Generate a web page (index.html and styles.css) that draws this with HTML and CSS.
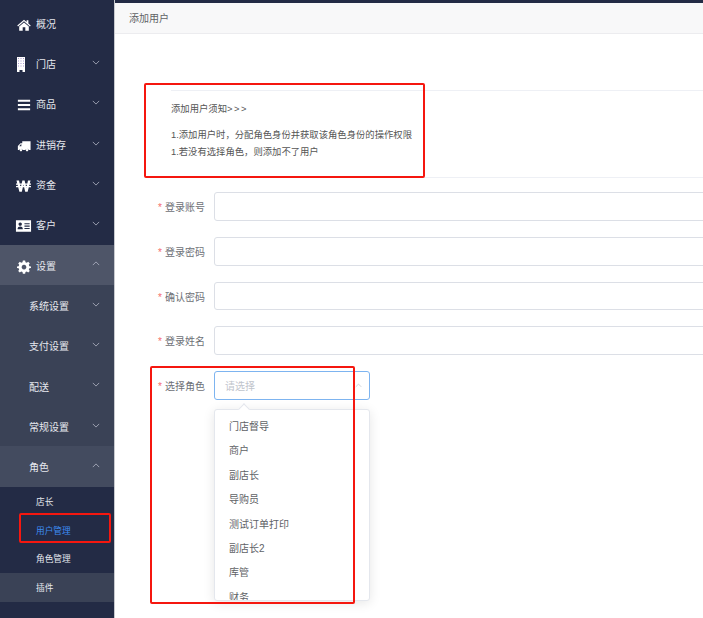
FILE: index.html
```html
<!DOCTYPE html>
<html lang="zh-CN">
<head>
<meta charset="utf-8">
<title>添加用户</title>
<link rel="stylesheet" href="styles.css">
</head>
<body>
<div class="app">
  <aside class="side">
    <div class="item"><svg class="ic" viewBox="0 0 16 14"><path d="M8 1 L0.3 7.6 L1.2 8.6 L8 2.8 L14.8 8.6 L15.7 7.6 L13 5.3 V1.5 H11 V3.6 Z M8 4 L2.5 8.7 V13.5 H6.5 V9.5 H9.5 V13.5 H13.5 V8.7 Z"/></svg><span>概况</span></div>
    <div class="item"><svg class="ic tall" viewBox="0 0 8 15"><path d="M0 0 H8 V15 H5.5 V13 H2.5 V15 H0 Z"/><path class="win" d="M1 1 h1 v1 h-1 Z M3.5 1 h1 v1 h-1 Z M6 1 h1 v1 h-1 Z M1 3.5 h1 v1 h-1 Z M3.5 3.5 h1 v1 h-1 Z M6 3.5 h1 v1 h-1 Z M1 6 h1 v1 h-1 Z M3.5 6 h1 v1 h-1 Z M6 6 h1 v1 h-1 Z M1 8.5 h1 v1 h-1 Z M3.5 8.5 h1 v1 h-1 Z M6 8.5 h1 v1 h-1 Z"/></svg><span>门店</span><svg class="ch" viewBox="0 0 10 6"><path d="M1 1 L5 5 L9 1"/></svg></div>
    <div class="item"><svg class="ic" viewBox="0 0 16 14"><path d="M1 1 H15 V3.4 H1 Z M1 5.8 H15 V8.2 H1 Z M1 10.6 H15 V13 H1 Z"/></svg><span>商品</span><svg class="ch" viewBox="0 0 10 6"><path d="M1 1 L5 5 L9 1"/></svg></div>
    <div class="item"><svg class="ic" viewBox="0 0 16 14"><path fill-rule="evenodd" d="M6 1.5 H15.5 V11.5 H13.4 A2 2 0 0 0 9.6 11.5 H6.4 A2 2 0 0 0 2.6 11.5 H1 V7 L4 3.8 H6 Z M4.5 5 L2.5 7.2 H5 V5 Z M4.5 10.2 A1.4 1.4 0 1 1 4.49 10.2 Z M11.5 10.2 A1.4 1.4 0 1 1 11.49 10.2 Z"/></svg><span>进销存</span><svg class="ch" viewBox="0 0 10 6"><path d="M1 1 L5 5 L9 1"/></svg></div>
    <div class="item"><svg class="ic won" viewBox="0 0 16 14"><path d="M0.5 1 H3.2 L5 9 L6.8 1 H9.2 L11 9 L12.8 1 H15.5 L12.4 13 H9.8 L8 5.5 L6.2 13 H3.6 Z M0 4.4 H16 V5.6 H0 Z M0 7 H16 V8.2 H0 Z"/></svg><span>资金</span><svg class="ch" viewBox="0 0 10 6"><path d="M1 1 L5 5 L9 1"/></svg></div>
    <div class="item"><svg class="ic wide" viewBox="0 0 18 14"><path fill-rule="evenodd" d="M1 1 H17 V13 H1 Z M5.5 3.2 A1.8 1.8 0 1 0 5.51 3.2 Z M2.8 10.5 H8.2 V9.5 Q8 7.6 5.5 7.6 Q3 7.6 2.8 9.5 Z M10 4 V5.2 H15.5 V4 Z M10 6.5 V7.7 H15.5 V6.5 Z M10 9 V10.2 H15.5 V9 Z"/></svg><span>客户</span><svg class="ch" viewBox="0 0 10 6"><path d="M1 1 L5 5 L9 1"/></svg></div>
    <div class="item open"><svg class="ic" viewBox="0 0 16 16"><path fill-rule="evenodd" d="M6.7 0.7 H9.3 L9.7 2.6 L11.2 3.2 L12.8 2.1 L14.6 3.9 L13.5 5.5 L14.1 7 L16 7.4 V9 L14.1 9.4 L13.5 10.9 L14.6 12.5 L12.8 14.2 L11.2 13.1 L9.7 13.7 L9.3 15.6 H6.7 L6.3 13.7 L4.8 13.1 L3.2 14.2 L1.4 12.5 L2.5 10.9 L1.9 9.4 L0 9 V7.4 L1.9 7 L2.5 5.5 L1.4 3.9 L3.2 2.1 L4.8 3.2 L6.3 2.6 Z M8 5.5 A2.7 2.7 0 1 0 8.01 5.5 Z"/></svg><span>设置</span><svg class="ch" viewBox="0 0 10 6"><path d="M1 5 L5 1 L9 5"/></svg></div>
    <div class="sub">
      <div class="item lvl2"><span>系统设置</span><svg class="ch" viewBox="0 0 10 6"><path d="M1 1 L5 5 L9 1"/></svg></div>
      <div class="item lvl2"><span>支付设置</span><svg class="ch" viewBox="0 0 10 6"><path d="M1 1 L5 5 L9 1"/></svg></div>
      <div class="item lvl2"><span>配送</span><svg class="ch" viewBox="0 0 10 6"><path d="M1 1 L5 5 L9 1"/></svg></div>
      <div class="item lvl2"><span>常规设置</span><svg class="ch" viewBox="0 0 10 6"><path d="M1 1 L5 5 L9 1"/></svg></div>
      <div class="item lvl2 open2"><span>角色</span><svg class="ch" viewBox="0 0 10 6"><path d="M1 5 L5 1 L9 5"/></svg></div>
    </div>
    <div class="leaf">店长</div>
    <div class="leaf active">用户管理</div>
    <div class="leaf">角色管理</div>
    <div class="leaf alt">插件</div>
  </aside>

  <main class="main">
    <header class="head">添加用户</header>
    <div class="body">
      <section class="notice">
        <p class="notice-title">添加用户须知<span class="gt">&gt;&gt;&gt;</span></p>
        <p class="notice-line">1.添加用户时，分配角色身份并获取该角色身份的操作权限</p>
        <p class="notice-line">1.若没有选择角色，则添加不了用户</p>
      </section>
      <form class="form">
        <div class="row"><label class="lab"><i>*</i>登录账号</label><div class="input"></div></div>
        <div class="row"><label class="lab"><i>*</i>登录密码</label><div class="input"></div></div>
        <div class="row"><label class="lab"><i>*</i>确认密码</label><div class="input"></div></div>
        <div class="row"><label class="lab"><i>*</i>登录姓名</label><div class="input"></div></div>
        <div class="row"><label class="lab"><i>*</i>选择角色</label>
          <div class="select"><span>请选择</span><svg class="sel-ch" viewBox="0 0 10 6"><path d="M1 5 L5 1 L9 5"/></svg></div>
        </div>
      </form>
    </div>
  </main>
</div>

<div class="drop">
  <div class="arrow"></div>
  <ul class="opts">
    <li>门店督导</li><li>商户</li><li>副店长</li><li>导购员</li><li>测试订单打印</li><li>副店长2</li><li>库管</li><li>财务</li>
  </ul>
</div>

<div class="mark mark-notice"></div>
<div class="mark mark-select"></div>
<div class="mark mark-menu"></div>
</body>
</html>
```
FILE: styles.css
```css
* { box-sizing: border-box; }
html, body { margin: 0; height: 100%; overflow: hidden; }
body { font-family: "Liberation Sans", "Noto Sans CJK SC", sans-serif; font-size: 10px; color: #606266; background: #fff; }
.app { display: flex; height: 618px; width: 703px; overflow: hidden; }

.side { width: 115px; flex: none; background: #232b45; color: #eef0f4; border-right: 1px solid #c8cacf; padding-top: 3.2px; }
.item { height: 40.3px; display: flex; align-items: center; padding: 3px 0 0 17px; position: relative; color: #e6e8ee; }
.item span { margin-left: 5px; line-height: 1; }
.ic { width: 14px; height: 14px; fill: #fff; flex: none; }
.ic.wide { width: 17px; margin-left: -2px; margin-right: -1px; }
.ic.won { width: 15px; margin-left: -1px; }
.ic.tall { width: 8px; height: 15px; margin-right: 6px; margin-top: -2px; }
.win { fill: #a898d0; }
.ch { position: absolute; right: 14px; top: 16.5px; width: 8px; height: 5px; fill: none; stroke: #b4b8c6; stroke-width: 1; }
.item.open { background: #4e5568; }
.sub { background: #3a4256; }
.lvl2 { padding-left: 24px; }
.open2 { background: #434b5f; }
.leaf { height: 28.7px; display: flex; align-items: center; padding-left: 36px; color: #e6e8ee; font-size: 8.67px; }
.leaf.active { color: #3d8bf2; }
.leaf.alt { background: #3a4256; }

.main { flex: 1; min-width: 0; display: flex; flex-direction: column; border-top: 3px solid #232b45; }
.head { height: 31px; flex: none; background: #f8f8f9; border-bottom: 1px solid #ececef; padding-left: 14px; line-height: 31px; color: #606266; }
.body { padding: 56px 0 0 29px; width: 620px; }
.notice { margin-left: 27px; width: 560px; height: 88px; border-top: 1px solid #eef0f5; border-bottom: 1px solid #eef0f5; padding-top: 11px; line-height: 14px; font-size: 9.33px; color: #555; font-family: "Liberation Sans", "Noto Sans CJK TC", sans-serif; }
.notice p { margin: 0; white-space: nowrap; }
.notice-title { margin-bottom: 12px !important; }
.gt { letter-spacing: 1.6px; }
.notice-line { margin-bottom: 3px !important; }

.form { margin-top: 14.3px; }
.row { height: 28.7px; display: flex; align-items: center; margin-bottom: 16px; }
.lab { width: 70px; flex: none; padding-right: 9px; text-align: right; white-space: nowrap; color: #6d7076; }
.lab i { font-style: normal; color: #f56c6c; margin-right: 3px; }
.input { width: 560px; flex: none; height: 28.7px; border: 1px solid #dcdfe6; border-radius: 3px; background: #fff; }
.select { width: 156px; height: 28.7px; border: 1px solid #7db4f0; border-radius: 3px; display: flex; align-items: center; justify-content: space-between; padding: 0 7px 0 10px; color: #c0c4cc; }
.sel-ch { width: 7px; height: 5px; fill: none; stroke: #c0c4cc; stroke-width: 1; }

.drop { position: absolute; left: 214px; top: 409px; width: 156px; height: 192px; background: #fff; border: 1px solid #e4e7ed; border-radius: 3px; box-shadow: 0 2px 12px rgba(0,0,0,.1); }
.arrow { position: absolute; left: 25px; top: -5px; width: 8px; height: 8px; background: #fff; border-left: 1px solid #e4e7ed; border-top: 1px solid #e4e7ed; transform: rotate(45deg); }
.opts { list-style: none; margin: 0; padding: 5px 0 0; height: 190px; overflow: hidden; }
.opts li { height: 24.4px; line-height: 24.4px; padding-left: 14px; color: #606266; }

.mark { position: absolute; border: 2px solid #f5170f; border-radius: 2px; pointer-events: none; }
.mark-notice { left: 144px; top: 83px; width: 281px; height: 95px; }
.mark-select { left: 150px; top: 366px; width: 205px; height: 238px; }
.mark-menu { left: 19px; top: 513px; width: 92px; height: 30px; }
```
